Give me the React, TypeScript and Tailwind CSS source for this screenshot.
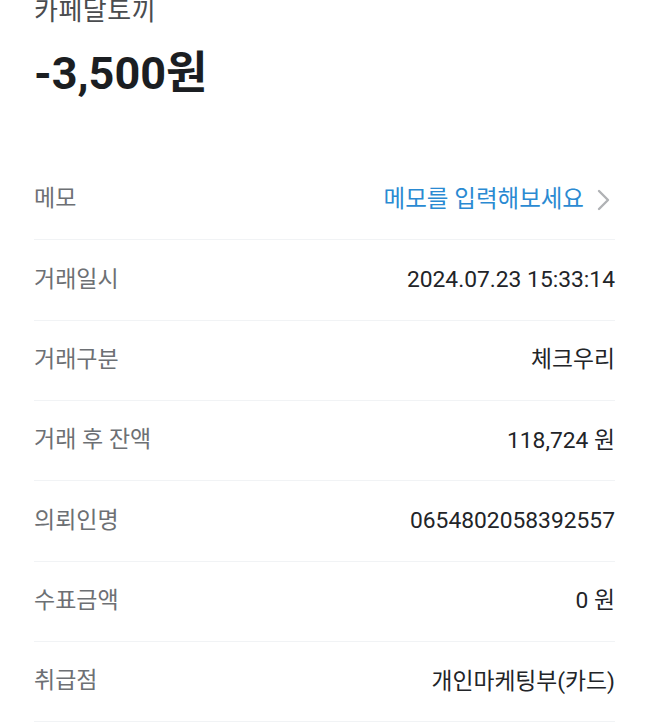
import React from 'react';

const rows: { label: string; value: string }[] = [
  { label: '거래일시', value: '2024.07.23 15:33:14' },
  { label: '거래구분', value: '체크우리' },
  { label: '거래 후 잔액', value: '118,724 원' },
  { label: '의뢰인명', value: '0654802058392557' },
  { label: '수표금액', value: '0 원' },
  { label: '취급점', value: '개인마케팅부(카드)' },
];

const font = { fontFamily: 'Roboto, "Noto Sans CJK KR", sans-serif' };

const App: React.FC = () => {
  return (
    <div className="min-h-screen bg-white pl-[34px] pr-[33px] overflow-hidden" style={font}>
      {/* Header */}
      <div className="-mt-[5px] text-[26px] leading-[32px] text-[#4a4c4f] tracking-[0.5px]">카페달토끼</div>
      <div className="mt-[24px] text-[45px] leading-[45px] font-bold text-[#1b1e22]">-3,500원</div>

      {/* Details */}
      <div className="mt-[64px]">
        <div className="flex items-center justify-between h-[80.33px] border-b border-[#f1f3f5]">
          <span className="text-[23px] text-[#6d7074]">메모</span>
          <button className="flex items-center gap-[13px] text-[23.5px] text-[#2a8ad2] mr-[5px]">
            <span>메모를 입력해보세요</span>
            <svg width="13" height="22" viewBox="0 0 13 22" fill="none">
              <path d="M2 2l9 9-9 9" stroke="#b0b2b5" strokeWidth="2.4" strokeLinecap="round" strokeLinejoin="round" />
            </svg>
          </button>
        </div>
        {rows.map(r => (
          <div
            key={r.label}
            className="flex items-center justify-between h-[80.33px] border-b border-[#f1f3f5]"
          >
            <span className="text-[23px] text-[#6d7074]">{r.label}</span>
            <span className="text-[22.8px] text-[#222428]">{r.value}</span>
          </div>
        ))}
      </div>
    </div>
  );
};

export default App;
